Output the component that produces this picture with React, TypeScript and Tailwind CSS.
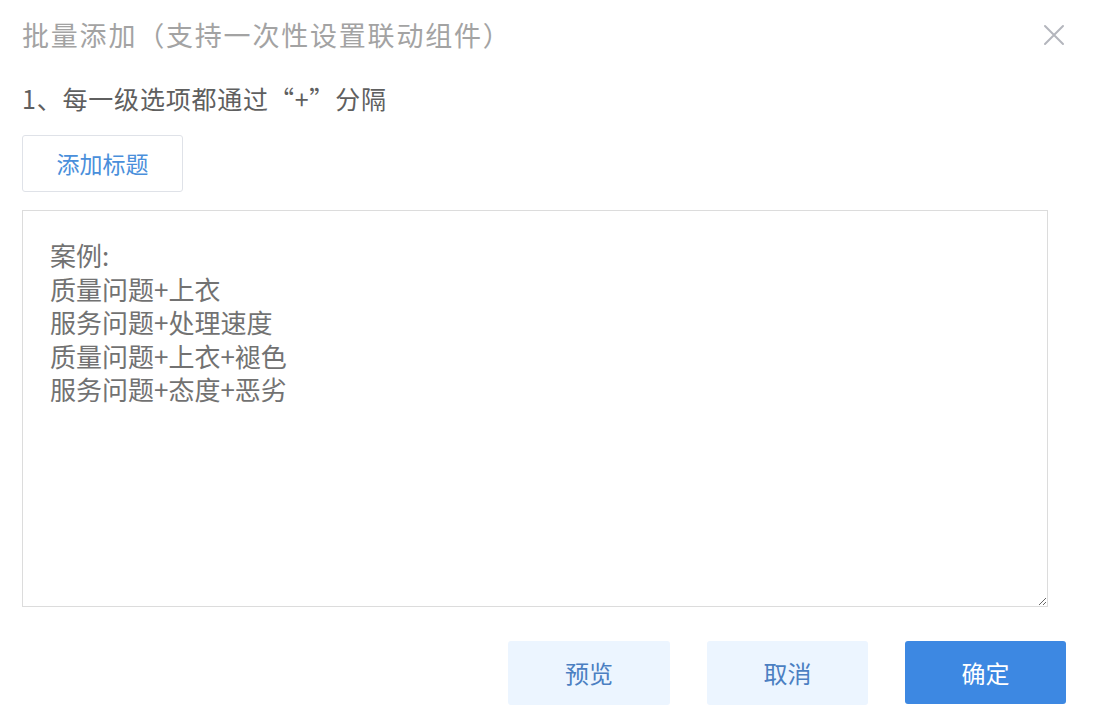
import { useState } from 'react';

const sample = `案例:
质量问题+上衣
服务问题+处理速度
质量问题+上衣+褪色
服务问题+态度+恶劣`;

function CloseIcon() {
  return (
    <svg width="22" height="22" viewBox="0 0 22 22" fill="none">
      <path d="M2 2L20 20M20 2L2 20" stroke="#b4b6bd" strokeWidth="2" strokeLinecap="round" />
    </svg>
  );
}

export default function App() {
  const [text, setText] = useState(sample);

  return (
    <div className="w-[1096px] h-[720px] bg-white font-['Noto_Sans_CJK_SC','Noto_Sans',sans-serif] pl-[22px] pr-[30px] pt-[15px]">
      <div className="flex items-center justify-between h-[40px]">
        <h2 className="text-[27px] tracking-[1.8px] leading-[40px] text-[#a3a3a3] font-normal">批量添加（支持一次性设置联动组件）</h2>
        <button className="mr-[1px] flex items-center justify-center">
          <CloseIcon />
        </button>
      </div>

      <p className="mt-[25px] text-[25px] tracking-[0.8px] leading-[36px] text-[#5f5f5f]">1、每一级选项都通过“+”分隔</p>

      <button className="mt-[19px] w-[161px] h-[57px] border border-[#dfe2e8] rounded-[3px] text-[23px] text-[#4a8fdb] flex items-center justify-center">
        添加标题
      </button>

      <textarea
        value={text}
        onChange={(e) => setText(e.target.value)}
        className="block mt-[18px] w-[1026px] h-[397px] border border-[#dcdcdc] pl-[27px] pt-[27px] text-[26px] leading-[33.5px] text-[#727272] outline-none resize-y"
      />

      <div className="mt-[34px] flex justify-end items-start gap-[37px]">
        <button className="w-[162px] h-[64px] rounded-[3px] bg-[#ecf5ff] text-[24px] text-[#4b7fc2] flex items-center justify-center">
          预览
        </button>
        <button className="w-[161px] h-[64px] rounded-[3px] bg-[#ecf5ff] text-[24px] text-[#4b7fc2] flex items-center justify-center">
          取消
        </button>
        <button className="w-[161px] h-[63px] rounded-[3px] bg-[#3d88e2] text-[24px] text-white flex items-center justify-center">
          确定
        </button>
      </div>
    </div>
  );
}
